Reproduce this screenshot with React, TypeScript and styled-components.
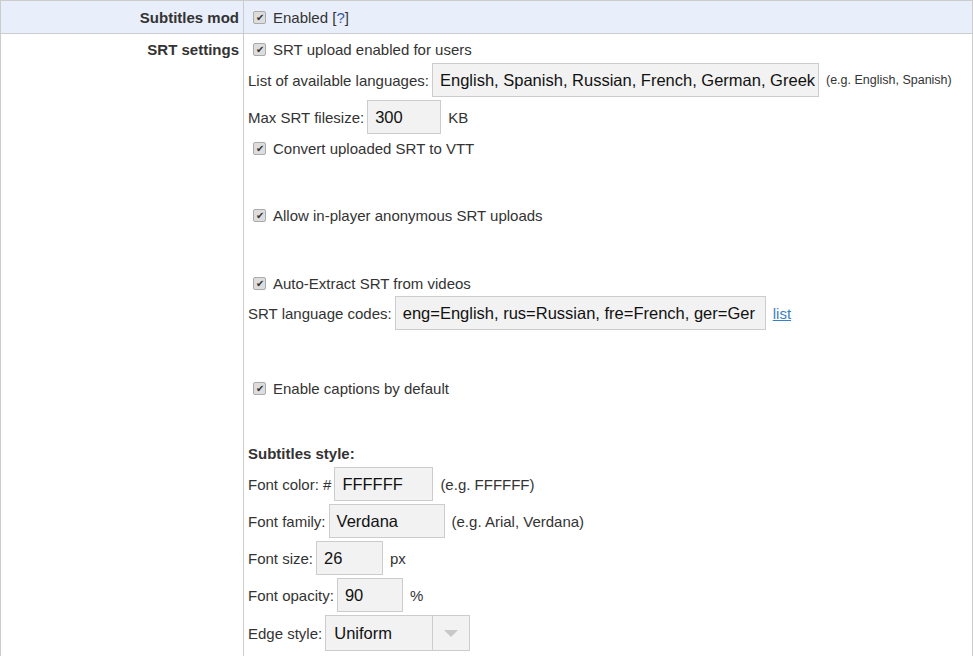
import styled, { createGlobalStyle } from "styled-components";

const Global = createGlobalStyle`
  body { margin: 0; background: #fff; font-family: "Liberation Sans", Arial, sans-serif; font-size: 15px; color: #333; }
`;

const Table = styled.div`
  width: 971px;
  border-left: 1px solid #ccc;
  border-right: 1px solid #ccc;
  border-top: 1px solid #ccc;
  display: grid;
  grid-template-columns: 243px 1fr;
`;
const Label = styled.div<{ $head?: boolean }>`
  background: ${(p) => (p.$head ? "#e8eefa" : "#fff")};
  border-right: 1px solid #ccc;
  border-bottom: ${(p) => (p.$head ? "1px solid #ccc" : "none")};
  font-weight: bold;
  text-align: right;
  padding: ${(p) => (p.$head ? "8px 4px 0 0" : "7px 4px 0 0")};
  height: ${(p) => (p.$head ? "33px" : "auto")};
  box-sizing: border-box;
`;
const Cell = styled.div<{ $head?: boolean }>`
  background: ${(p) => (p.$head ? "#e8eefa" : "#fff")};
  border-bottom: ${(p) => (p.$head ? "1px solid #ccc" : "none")};
  padding: ${(p) => (p.$head ? "0 0 0 4px" : "0 0 10px 4px")};
  display: flex;
  flex-direction: column;
  justify-content: ${(p) => (p.$head ? "center" : "flex-start")};
`;
const Check = styled.label<{ $top?: number }>`
  display: flex;
  align-items: center;
  gap: 7px;
  padding-left: 5px;
  height: 18px;
  margin-top: ${(p) => p.$top ?? 0}px;
`;
const Box = styled.span`
  width: 11px;
  height: 11px;
  border: 1px solid #aaa;
  border-radius: 2px;
  background: #ddd;
  font-size: 10px;
  line-height: 11px;
  text-align: center;
  color: #333;
`;
const Field = styled.div<{ $top?: number }>`
  display: flex;
  align-items: center;
  gap: 3px;
  margin-top: ${(p) => p.$top ?? 3}px;
`;
const Input = styled.div<{ $w: number }>`
  width: ${(p) => p.$w}px;
  flex-shrink: 0;
  height: 34px;
  box-sizing: border-box;
  background: #f2f2f2;
  border: 1px solid #ccc;
  font-size: 16.5px;
  color: #111;
  padding: 0 7px;
  display: flex;
  align-items: center;
  white-space: nowrap;
  overflow: hidden;
`;
const Hint = styled.span<{ $small?: boolean }>`
  font-size: ${(p) => (p.$small ? "12.5px" : "15px")};
  margin-left: 4px;
  white-space: nowrap;
`;
const Link = styled.a`
  color: #3b7fc4;
  text-decoration: underline;
  margin-left: 4px;
`;
const Heading = styled.div`
  font-weight: bold;
  margin-top: 48px;
  height: 18px;
  line-height: 18px;
`;
const Select = styled.div`
  display: flex;
  height: 36px;
  border: 1px solid #ccc;
  background: #f2f2f2;
  box-sizing: border-box;
  font-size: 16.5px;
  color: #111;
`;
const SelText = styled.div`
  width: 106px;
  padding: 0 8px;
  box-sizing: border-box;
  display: flex;
  align-items: center;
`;
const Arrow = styled.div`
  width: 36px;
  border-left: 1px solid #ccc;
  display: flex;
  align-items: center;
  justify-content: center;
  &::after {
    content: "";
    border-left: 7px solid transparent;
    border-right: 7px solid transparent;
    border-top: 7px solid #c8c8c8;
  }
`;

const CB = ({ children, top }: { children: React.ReactNode; top?: number }) => (
  <Check $top={top}>
    <Box>✔</Box>
    <span>{children}</span>
  </Check>
);

export default () => (
  <>
    <Global />
    <Table>
      <Label $head>Subtitles mod</Label>
      <Cell $head>
        <CB>
          Enabled [<span style={{ color: "#3b5aa0" }}>?</span>]
        </CB>
      </Cell>
      <Label>SRT settings</Label>
      <Cell>
        <CB top={6}>SRT upload enabled for users</CB>
        <Field $top={5}>
          List of available languages:
          <Input $w={387}>English, Spanish, Russian, French, German, Greek</Input>
          <Hint $small>(e.g. English, Spanish)</Hint>
        </Field>
        <Field>
          Max SRT filesize:
          <Input $w={74}>300</Input>
          <Hint>KB</Hint>
        </Field>
        <CB top={5}>Convert uploaded SRT to VTT</CB>
        <CB top={49}>Allow in-player anonymous SRT uploads</CB>
        <CB top={50}>Auto-Extract SRT from videos</CB>
        <Field $top={4}>
          SRT language codes:
          <Input $w={371}>eng=English, rus=Russian, fre=French, ger=Ger</Input>
          <Link>list</Link>
        </Field>
        <CB top={49}>Enable captions by default</CB>
        <Heading>Subtitles style:</Heading>
        <Field $top={4}>
          Font color: #<Input $w={99}>FFFFFF</Input>
          <Hint>(e.g. FFFFFF)</Hint>
        </Field>
        <Field>
          Font family:
          <Input $w={116}>Verdana</Input>
          <Hint>(e.g. Arial, Verdana)</Hint>
        </Field>
        <Field>
          Font size:
          <Input $w={67}>26</Input>
          <Hint>px</Hint>
        </Field>
        <Field>
          Font opacity:
          <Input $w={66}>90</Input>
          <Hint>%</Hint>
        </Field>
        <Field>
          Edge style:
          <Select>
            <SelText>Uniform</SelText>
            <Arrow />
          </Select>
        </Field>
      </Cell>
    </Table>
  </>
);
